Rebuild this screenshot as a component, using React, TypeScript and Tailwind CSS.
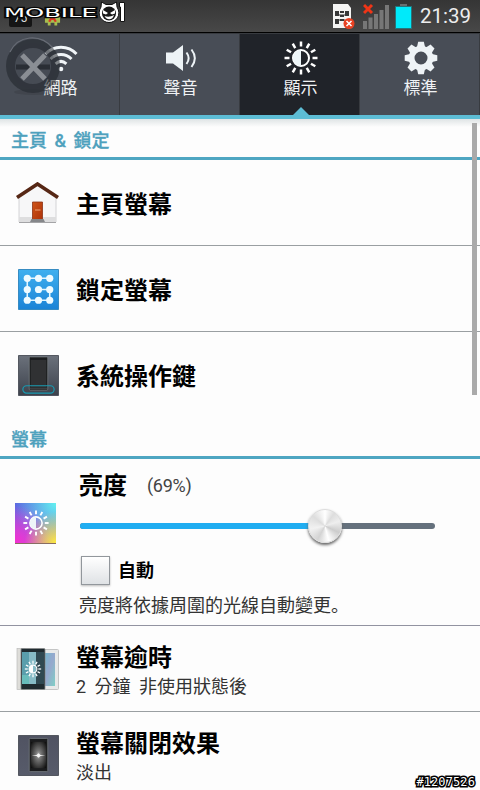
import type { ReactNode } from "react";

const SUN_RAYS = [0, 30, 60, 90, 120, 150, 180, 210, 240, 270, 300, 330];
const GEAR_TEETH = [0, 45, 90, 135, 180, 225, 270, 315];

function WifiIcon() {
  return (
    <svg width="34" height="28" viewBox="0 0 34 28" fill="none" stroke="#f1f5f8" strokeWidth="3">
      <path d="M1.500 10C10 1 24 1 32.500 10" />
      <path d="M6.500 15c6-6 15-6 21 0" />
      <path d="M11.600 19.800c3.400-3 7.400-3 10.800 0" />
      <circle cx="17" cy="25" r="2.300" fill="#f1f5f8" stroke="none" />
    </svg>
  );
}

function SoundIcon() {
  return (
    <svg width="32" height="28" viewBox="0 0 32 28">
      <path d="M1 8.500h7L18 1v26l-10-7.500H1z" fill="#edf3f6" />
      <path d="M21.500 8.500c2.600 3.500 2.600 8 0 11.500M26.500 5.500c4.200 5.500 4.200 12 0 17.500" fill="none" stroke="#edf3f6" strokeWidth="2" />
    </svg>
  );
}

function SunIcon({ size }: { size: number }) {
  return (
    <svg width={size} height={size} viewBox="-17 -17 34 34">
      {SUN_RAYS.map((a) => (
        <path key={a} d="M0-16.500V-11.500" transform={`rotate(${a})`} stroke="#fff" strokeWidth="2.500" />
      ))}
      <circle r="8" fill="none" stroke="#fff" strokeWidth="2" />
      <path d="M0-8a8 8 0 0 0 0 16z" fill="#edf5f8" />
    </svg>
  );
}

function GearIcon() {
  return (
    <svg width="34" height="34" viewBox="-17 -17 34 34">
      {GEAR_TEETH.map((a) => (
        <path key={a} d="M-2.800-16.300h5.600L4.300-10h-8.600z" transform={`rotate(${a})`} fill="#eef3f6" />
      ))}
      <circle r="9.400" fill="none" stroke="#eef3f6" strokeWidth="5.800" />
    </svg>
  );
}

function HouseIcon() {
  return (
    <svg width="44" height="42" viewBox="0 0 44 42">
      <defs>
        <linearGradient id="door" x2="1" y2="1">
          <stop stopColor="#cf5518" />
          <stop offset="1" stopColor="#ac3109" />
        </linearGradient>
      </defs>
      <path d="M3 14 22 3l18 11v26H3z" fill="#f7f7f8" stroke="#c9c9cb" strokeWidth=".8" />
      <path d="M3 35h37v5H3z" fill="#dededf" />
      <path d="M3 40.500h37" stroke="#a4a4a6" />
      <path d="M1 15.500 21.500 2 42 15.500" fill="none" stroke="#562715" strokeWidth="3.600" />
      <path d="M16.500 20h10v18h-10z" fill="url(#door)" stroke="#8d3215" strokeWidth=".8" />
      <path d="M19 28h5.500" stroke="#eba277" />
      <path d="M15.500 37h12l1.500 3H14z" fill="#85878a" />
    </svg>
  );
}

function PatternIcon() {
  return (
    <svg width="41" height="41" viewBox="0 0 42 42">
      <defs>
        <linearGradient id="pattern" x2="0" y2="1">
          <stop stopColor="#3fb0ef" />
          <stop offset="1" stopColor="#1a83d6" />
        </linearGradient>
      </defs>
      <path d="M.5.500h41v41H.500z" fill="url(#pattern)" stroke="#3389c0" />
      <path d="M32.500 9.500H9.500v22.500h23V21H21" fill="none" stroke="#e3f6ff" strokeWidth="1.600" />
      {[9.5, 21, 32].map((y) => [9.5, 21, 32.5].map((x) => <circle key={`${x}-${y}`} cx={x} cy={y} r="3.700" fill="#effbff" />))}
    </svg>
  );
}

function PhoneIcon({ flash = false }: { flash?: boolean }) {
  const id = flash ? "flash" : "keys";
  return (
    <svg width="41" height="41" viewBox="0 0 42 42">
      <defs>
        <linearGradient id={`${id}-bg`} x2="0" y2="1">
          <stop stopColor={flash ? "#505362" : "#6b717b"} />
          <stop offset="1" stopColor={flash ? "#575b6a" : "#3d424c"} />
        </linearGradient>
        <radialGradient id="glow" cx=".5" cy=".5" r=".65">
          <stop stopColor="#b9b9b9" />
          <stop offset=".25" stopColor="#777" />
          <stop offset="1" stopColor="#111" />
        </radialGradient>
      </defs>
      <path d="M.5.500h41v41H.500z" fill={`url(#${id}-bg)`} stroke="#50545e" />
      <rect x="11.500" y={flash ? 3.5 : 2} width="19" height="34" rx="1" fill="#1b1c1e" stroke="#777b80" strokeWidth=".8" />
      <path d={flash ? "M13 7h16v27H13z" : "M13 5h16v28H13z"} fill={flash ? "url(#glow)" : "#303133"} />
      {!flash && <path d="M12 34h18" stroke="#66696c" strokeWidth=".7" />}
      {flash ? (
        <path d="m14 21 5-.6 2-1.800 2 1.800 5 .6-5 .6-2 1.800-2-1.800z" fill="#f7f7f7" />
      ) : (
        <rect x="5" y="31.500" width="32" height="7.500" rx="3.700" fill="none" stroke="#189ab1" strokeWidth="1.200" />
      )}
    </svg>
  );
}

function TimeoutIcon() {
  return (
    <svg width="44" height="46" viewBox="0 0 44 46">
      <defs>
        <linearGradient id="screen" x2="1" y2="1">
          <stop stopColor="#73b7ce" />
          <stop offset=".5" stopColor="#96a8cd" />
          <stop offset="1" stopColor="#80cfc6" />
        </linearGradient>
      </defs>
      <rect x="1" y="2.500" width="8" height="41" fill="#deddd9" stroke="#bbb" strokeWidth=".7" />
      <rect x="24" y="3.500" width="18.500" height="40" rx="1" fill="#e8e9e9" stroke="#c4c5c5" />
      <path d="M28 7h11v33H28z" fill="url(#screen)" />
      <rect x="5" y="2.500" width="24" height="41" rx="1" fill="#202b30" stroke="#898c8c" strokeWidth=".8" />
      <path d="M6 6h7v32H6z" fill="#5a9eac" />
      <path d="M13 6h7v32h-7z" fill="#87bbc6" />
      <path d="M20 6h8v32h-8z" fill="#304952" />
      <path d="M6 29h7v9H6z" fill="#68bcbb" />
      <g transform="translate(17 23) scale(.48)">
        {SUN_RAYS.map((a) => (
          <path key={a} d="M0-17V-11" transform={`rotate(${a})`} stroke="#fff" strokeWidth="2.600" />
        ))}
        <circle r="8" fill="none" stroke="#fff" strokeWidth="2.500" />
        <path d="M0-8a8 8 0 0 0 0 16z" fill="#fff" />
      </g>
    </svg>
  );
}

function StatusBar() {
  return (
    <header className="flex h-8 items-center bg-linear-to-b from-[#353535] to-[#484848] pr-[9px]">
      <div className="flex h-full w-[70px] items-end gap-3 pb-[5px] pl-[9px]">
        <div className="flex h-[15px] w-[23px] items-end justify-center rounded-xs bg-[#151515] pb-[3px] text-[12px] leading-3 text-[#ddd]">75</div>
        <svg width="17" height="18" viewBox="0 0 18 18">
          <path d="M3 5 9 1l6 4v3h2v6h-3v3h-3v-3H7v3H4v-3H1V8h2z" fill="#a7bd4f" />
          <path d="m5.500 13 3.500-6 3.500 6M9 7v4" fill="none" stroke="#d93422" strokeWidth="2.400" />
        </svg>
      </div>
      <div className="ml-auto flex items-center">
        <svg width="22" height="27" viewBox="0 0 22 27">
          <path d="M0 1h15l3 4v20H0z" fill="#f4f4f3" />
          <path d="M2 8h4v5H2zm10 0h4v5h-4zM2 16h4v5H2zM7 8h4v2H7zm0 4h4v2H7zm0 4h4v2H7z" fill="#373737" />
          <path d="M6 12h6M6 17h6" stroke="#373737" />
          <circle cx="16" cy="20.500" r="5.500" fill="#e84122" />
          <path d="m13.500 18 5 5m0-5-5 5" stroke="#fff" strokeWidth="1.500" />
        </svg>
        <svg className="ml-2" width="26" height="26" viewBox="0 0 26 26">
          <path d="M0 18h4v8H0zm5.500-3.500h4V26h-4zM11 11h4v15h-4zm5.500-4h4v19h-4zM22 2h4v24h-4z" fill="#777" />
          <path d="m1 2 8 8m0-8-8 8" stroke="#ef3517" strokeWidth="3" />
        </svg>
        <svg className="ml-[6px]" width="17" height="25" viewBox="0 0 17 25">
          <path d="M5 0h7v3H5z" fill="#686f71" />
          <path d="M.5 2.500h16v22H.500z" fill="#00eafa" stroke="#26747a" />
        </svg>
        <time className="ml-[8px] w-[51px] whitespace-nowrap text-[20.500px] leading-8 text-[#ededed]">21:39</time>
      </div>
    </header>
  );
}

function Tab({ label, active, children }: { label: string; active?: boolean; children: ReactNode }) {
  return (
    <button className={`relative flex h-full w-[120px] flex-col items-center border-t border-r border-[#383b40] pt-[6px] pl-[2px] ${active ? "bg-[#202329]" : "bg-[#484d56]"}`}>
      <span className="flex h-9 items-center">{children}</span>
      <span className="text-[17px] leading-6 text-[#f0f2f4]">{label}</span>
      {active && (
        <svg className="absolute bottom-0 left-[53px]" width="16" height="8" viewBox="0 0 16 8">
          <path d="m0 8 8-8 8 8z" fill="#5dbdd5" />
        </svg>
      )}
    </button>
  );
}

function SectionTitle({ children }: { children: ReactNode }) {
  return (
    <h2 className="flex h-[41px] items-center border-b-[3px] border-[#4ea6c2] pt-[5px] pl-[11px] text-[18px] font-medium text-[#4ea1bd] [word-spacing:3px] [-webkit-text-stroke:.3px_#4ea1bd]">
      {children}
    </h2>
  );
}

function SettingRow({ icon, title, summary, last }: { icon: ReactNode; title: string; summary?: string; last?: boolean }) {
  return (
    <div className={`flex items-center ${last ? "h-[85px]" : "h-[86px] border-b border-[#9a9fa2]"}`}>
      <span className="flex w-[76px] shrink-0 justify-center pt-px">{icon}</span>
      <div className={summary ? "pt-[6px]" : "pt-[5px]"}>
        <h3 className="text-[24px] leading-[30px] font-bold text-black">{title}</h3>
        {summary && <p className="text-[18px] leading-[27px] text-[#333] [word-spacing:4px]">{summary}</p>}
      </div>
    </div>
  );
}

function Brightness() {
  return (
    <div className="flex h-[167px] border-b border-[#9293a1]">
      <div className="w-[79px] shrink-0 pt-[44px] pl-[15px]">
        <div className="flex h-[41px] w-[41px] items-center justify-center border-b border-[#896d62] bg-[radial-gradient(circle_at_100%_100%,#ffed3c,transparent_55%),radial-gradient(circle_at_0%_100%,#f52fd0,transparent_65%),radial-gradient(circle_at_100%_0%,#62f2f0,transparent_75%),linear-gradient(#5a62e0,#a85fe6)]">
          <SunIcon size={26} />
        </div>
      </div>
      <div className="w-[357px] pt-[10px]">
        <div className="flex items-center leading-[34px]">
          <h3 className="text-[24px] font-bold text-black">亮度</h3>
          <span className="ml-5 inline-block w-[46px] text-[18px] tracking-[-.3px] text-[#444]">(69%)</span>
        </div>
        <div className="relative mt-[20px] ml-px h-[6px] w-[355px] rounded-full bg-[#65717d]">
          <div className="h-full w-[69%] rounded-full bg-[#20adf1]" />
          <div className="absolute -top-[14px] left-[228px] size-[34px] rounded-full border border-[#ddd] bg-[conic-gradient(#fff,#ddd_10%,#eee_20%,#ccc_32%,#fff_46%,#d3d3d3_58%,#f2f2f2_72%,#ddd_86%,#fff)] shadow-[0_2px_3px_#666]" />
        </div>
        <label className="mt-[25px] ml-[2px] flex items-center text-[18px] leading-[30px] font-bold">
          <input type="checkbox" className="mr-[8px] size-[29px] appearance-none border border-[#92979c] bg-linear-to-b from-white to-[#dfe2e5] shadow-[0_1px_2px_#bbb]" />
          <span className="pt-[2px]">自動</span>
        </label>
        <p className="mt-[4px] text-[18px] leading-[28px] whitespace-nowrap text-[#333]">
          亮度將依據周圍的光線自動變更<span lang="zh-CN" className="font-['Noto_Sans_CJK_SC']">。</span>
        </p>
      </div>
    </div>
  );
}

function MobileLogo() {
  return (
    <div className="absolute top-0 left-[3px] h-6 w-[122px]">
      <svg className="absolute top-[4px] left-0 overflow-visible" width="95" height="16" viewBox="0 0 95 16">
        <text x="1" y="13" textLength="93" lengthAdjust="spacingAndGlyphs" fill="#fff" stroke="#080808" strokeWidth="2.500" paintOrder="stroke" className="font-['DejaVu_Sans'] text-[13px]">
          MOBILE
        </text>
      </svg>
      <svg className="absolute top-px left-[95px]" width="22" height="23" viewBox="0 0 22 23">
        <path d="M3 6 3.500 1 8 3.500h6L18.500 1 19 6c5 8-1 15.500-8 15.500S-2 14 3 6z" fill="#fff" stroke="#111" />
        <circle cx="11" cy="12.500" r="7" fill="#181818" />
        <path d="m5 9 5 3-2 1.500-3-1zm12 0-5 3 2 1.500 3-1zM6.500 15c3 1 6 1 9.500-1-1 5-7 6-9.500 1z" fill="#fff" />
      </svg>
      <svg className="absolute top-px left-[115px]" width="8" height="22" viewBox="0 0 8 22">
        <path d="M1.500 1.500h5v19h-4V6h-1z" fill="#fff" stroke="#111" />
      </svg>
    </div>
  );
}

function FloatingClose() {
  return (
    <svg className="absolute top-[35px] left-[3px] opacity-75" width="60" height="62" viewBox="0 0 60 62">
      <ellipse cx="30" cy="57" rx="19" ry="3" fill="#25282d" opacity=".25" />
      <circle cx="30" cy="31" r="22.500" fill="#444951" fillOpacity=".45" stroke="#1e2228" strokeWidth="9" strokeOpacity=".7" />
      <path d="M7 17C15 0 37-2 50 13" fill="none" stroke="#737780" strokeWidth="1.200" />
      <path d="M13 32h34" stroke="#20242a" strokeWidth="5" />
      <path d="m19 20 23 24m0-24L19 44" stroke="#a1a4a9" strokeWidth="5" />
    </svg>
  );
}

export default function App() {
  return (
    <main className="relative h-[790px] w-[480px] overflow-hidden bg-[#fdfdfd] font-[Roboto,'Noto_Sans_CJK_TC',sans-serif]">
      <StatusBar />
      <nav className="flex h-[87px] border-t border-b-[4px] border-t-black border-b-[#5dbdd5]">
        <Tab label="網路"><WifiIcon /></Tab>
        <Tab label="聲音"><SoundIcon /></Tab>
        <Tab label="顯示" active><SunIcon size={34} /></Tab>
        <Tab label="標準"><GearIcon /></Tab>
      </nav>
      <section className="bg-linear-to-b from-[#dfe4e5] to-[#fdfdfd] to-[8px]">
        <SectionTitle>主頁 &amp; 鎖定</SectionTitle>
        <SettingRow icon={<HouseIcon />} title="主頁螢幕" />
        <SettingRow icon={<PatternIcon />} title="鎖定螢幕" />
        <SettingRow icon={<PhoneIcon />} title="系統操作鍵" last />
      </section>
      <section className="pt-px">
        <SectionTitle>螢幕</SectionTitle>
        <Brightness />
        <SettingRow icon={<TimeoutIcon />} title="螢幕逾時" summary="2 分鐘 非使用狀態後" />
        <SettingRow icon={<PhoneIcon flash />} title="螢幕關閉效果" summary="淡出" last />
      </section>
      <div className="absolute top-[123px] right-[3px] h-[272px] w-[5px] bg-[#aaa]" />
      <FloatingClose />
      <MobileLogo />
      <span className="absolute right-[5px] bottom-px font-['DejaVu_Sans_Mono'] text-[12px] leading-[14px] tracking-[.1px] text-white [paint-order:stroke_fill] [-webkit-text-stroke:3px_black]">#1207526</span>
    </main>
  );
}
